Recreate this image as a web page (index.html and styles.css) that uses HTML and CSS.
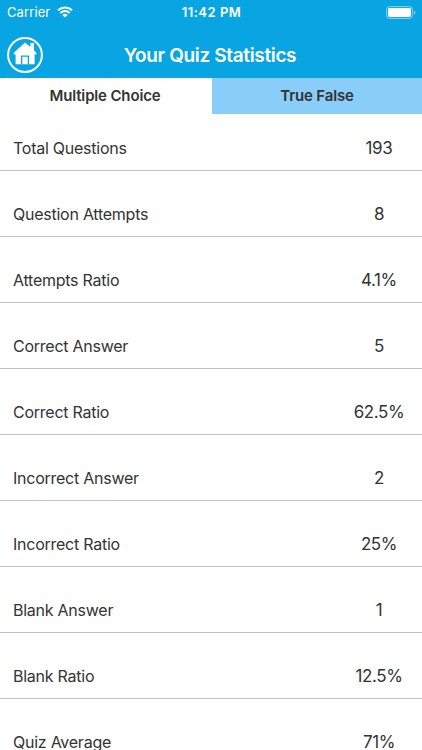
FILE: index.html
```
<!DOCTYPE html>
<html lang="en">
<head>
    <meta charset="UTF-8">
    <meta name="viewport" content="width=device-width, initial-scale=1.0">
    <title>Your Quiz Statistics</title>
    <link rel="stylesheet" href="styles.css">
</head>
<body>
    <header>
        <div class="status">
            <div class="carrier">
                <span>Carrier</span>
                <svg class="wifi" width="16" height="12" viewBox="0 0 16 12">
                    <path d="M.9 4.2a10.4 10.4 0 0 1 14.2 0M3.3 6.9a6.9 6.9 0 0 1 9.4 0" fill="none" stroke="#fff" stroke-width="2"/>
                    <path d="M8 11.4 5.4 8.9a3.8 3.8 0 0 1 5.2 0z" fill="#fff"/>
                </svg>
            </div>
            <div class="time">11:42 PM</div>
            <svg class="battery" width="30" height="13" viewBox="0 0 30 13">
                <rect x=".6" y=".6" width="25.8" height="11.8" rx="3" fill="none" stroke="#8fd2f2"/>
                <rect x="2" y="2" width="23" height="9" rx="1.4" fill="#fff"/>
                <path d="M28 4.3v4.4q1.3-.7 1.3-2.2T28 4.3z" fill="#8fd2f2"/>
            </svg>
        </div>
        <div class="title">
            <button class="home" aria-label="Home">
                <svg width="36" height="36" viewBox="0 0 36 36">
                    <circle cx="18" cy="18" r="16.9" fill="none" stroke="#fff" stroke-width="2"/>
                    <path d="M18 5.4 23.4 10V6h3.6v7.2l2.4 2.6v1.8h-1.8v9.6H8.6v-9.6H6.8v-1.8z" fill="#fff"/>
                    <path d="M14.6 27.2v-8h6.8v8" fill="none" stroke="#08a5e2" stroke-width="1.3"/>
                </svg>
            </button>
            <h1>Your Quiz Statistics</h1>
        </div>
    </header>

    <nav>
        <button class="tab active">Multiple Choice</button>
        <button class="tab">True False</button>
    </nav>

    <ul class="stats">
        <li><span class="name">Total Questions</span><span class="value">193</span></li>
        <li><span class="name">Question Attempts</span><span class="value">8</span></li>
        <li><span class="name">Attempts Ratio</span><span class="value">4.1%</span></li>
        <li><span class="name">Correct Answer</span><span class="value">5</span></li>
        <li><span class="name">Correct Ratio</span><span class="value">62.5%</span></li>
        <li><span class="name">Incorrect Answer</span><span class="value">2</span></li>
        <li><span class="name">Incorrect Ratio</span><span class="value">25%</span></li>
        <li><span class="name">Blank Answer</span><span class="value">1</span></li>
        <li><span class="name">Blank Ratio</span><span class="value">12.5%</span></li>
        <li><span class="name">Quiz Average</span><span class="value">71%</span></li>
    </ul>
</body>
</html>
```
FILE: styles.css
```
* {
    box-sizing: border-box;
}
body {
    margin: 0;
    height: 750px;
    overflow: hidden;
    background-color: white;
    color: #333;
    font-family: Inter, "Liberation Sans", sans-serif;
}
header {
    height: 78px;
    background-color: #08a5e2;
    color: white;
}
.status {
    display: grid;
    grid-template-columns: 1fr auto 1fr;
    align-items: center;
    height: 24px;
    padding: 0 6px 0 7px;
    font-size: 13px;
}
.carrier {
    display: flex;
    align-items: center;
    gap: 7px;
    letter-spacing: 0.1px;
}
.time {
    font-weight: 600;
    letter-spacing: 0.5px;
}
.battery {
    justify-self: end;
}
.title {
    display: grid;
    grid-template-columns: 36px 1fr 36px;
    align-items: center;
    height: 62px;
    padding: 0 9px 0 7px;
}
.home {
    padding: 0;
    border: 0;
    background: none;
    line-height: 0;
}
h1 {
    margin: 0;
    text-align: center;
    font-size: 19px;
    font-weight: 600;
    letter-spacing: -0.35px;
}
nav {
    display: flex;
    height: 36px;
}
.tab {
    flex: 1;
    padding: 0 0 2px;
    border: 0;
    background-color: #89cdf9;
    color: #333;
    font-family: inherit;
    font-size: 15px;
    font-weight: 600;
    letter-spacing: -0.15px;
}
.tab.active {
    flex: none;
    width: 212px;
    padding-right: 2px;
    background-color: white;
}
.stats {
    margin: 0;
    padding: 0;
    list-style: none;
}
.stats li {
    display: flex;
    justify-content: space-between;
    align-items: flex-end;
    height: 66px;
    padding: 0 13px 12px;
    border-bottom: 1px solid #c4c4c4;
    line-height: 20px;
}
.stats li:first-child {
    height: 57px;
}
.name {
    font-size: 16px;
    letter-spacing: -0.25px;
}
.value {
    width: 60px;
    text-align: center;
    font-size: 17px;
    letter-spacing: -0.4px;
}
```
